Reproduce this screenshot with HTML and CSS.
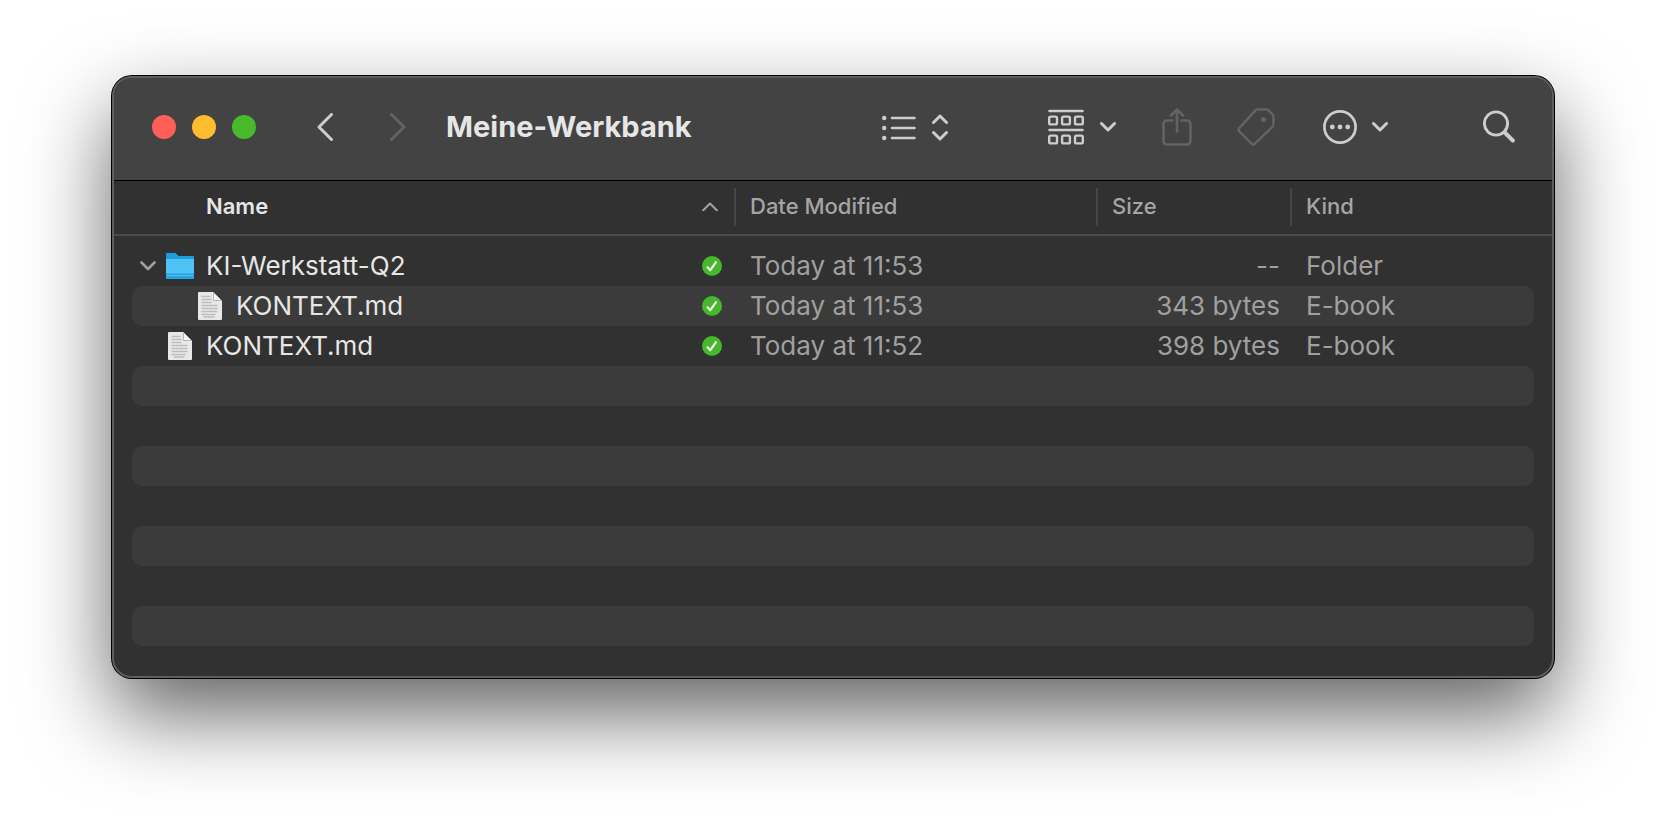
FILE: index.html
```html
<!DOCTYPE html>
<html lang="en">
<head>
    <meta charset="UTF-8">
    <meta name="viewport" content="width=device-width, initial-scale=1.0">
    <title>Meine-Werkbank</title>
    <link rel="stylesheet" href="styles.css">
</head>
<body>
    <!-- shared icons -->
    <svg class="sprite" aria-hidden="true">
        <symbol id="icon-check" viewBox="0 0 20 20">
            <circle cx="10" cy="10" r="10" fill="#45b82c"/>
            <path d="M5.5 11.200 8.300 14.200 14 6.200" fill="none" stroke="#fff" stroke-width="2" stroke-linecap="round" stroke-linejoin="round"/>
        </symbol>
        <symbol id="icon-down" viewBox="0 0 16 10">
            <path d="M1.5 1.5 8 8l6.5-6.5" fill="none" stroke="currentColor" stroke-width="3" stroke-linecap="round" stroke-linejoin="round"/>
        </symbol>
        <symbol id="icon-page" viewBox="0 0 28 28">
            <path d="M3 0h14l9 9v18a1 1 0 0 1-1 1H3a1 1 0 0 1-1-1V1a1 1 0 0 1 1-1z" fill="#e8e8e8"/>
            <path d="M17 0v8a1 1 0 0 0 1 1h8z" fill="#f6f6f6"/>
            <path d="M17.5 1v7.500h8" fill="none" stroke="#b5b5b5" stroke-width="1"/>
            <path d="M6 4.500h8M6 7.500h9M6 10.500h9M6 13.500h16M6 16.500h15M6 19.500h16M6 22.500h13M8 25h10" fill="none" stroke="#bdbdbd" stroke-width="1.300" stroke-dasharray="3 1 2 1 4 1"/>
        </symbol>
        <symbol id="icon-folder" viewBox="0 0 28 26">
            <path d="M0 1a1 1 0 0 1 1-1h8.500l3 3H27a1 1 0 0 1 1 1v8H0z" fill="#1c9fdc"/>
            <path d="M0 6h28v19a1 1 0 0 1-1 1H1a1 1 0 0 1-1-1z" fill="#4fc1f2"/>
            <path d="M0 20.500h28V25a1 1 0 0 1-1 1H1a1 1 0 0 1-1-1z" fill="#23a3df"/>
            <path d="M1 22.500h26" stroke="#4fc1f2" stroke-width="1"/>
        </symbol>
    </svg>

    <main class="window">
        <header class="toolbar">
            <div class="lights">
                <button class="light close" aria-label="Close"></button>
                <button class="light minimize" aria-label="Minimize"></button>
                <button class="light zoom" aria-label="Zoom"></button>
            </div>
            <nav class="history">
                <button aria-label="Back">
                    <svg width="16" height="28" viewBox="0 0 16 28"><path d="M14.500 1.500 2 14l12.500 12.500" stroke-width="3"/></svg>
                </button>
                <button aria-label="Forward" disabled>
                    <svg width="16" height="28" viewBox="0 0 16 28"><path d="M1.500 1.500 14 14 1.500 26.500" stroke-width="3"/></svg>
                </button>
            </nav>
            <h1>Meine-Werkbank</h1>
            <button class="view" aria-label="List view">
                <svg width="34" height="28" viewBox="0 0 34 28">
                    <path d="M10 5h22.500M10 15h22.500M10 25h22.500" stroke-width="2.600"/>
                    <path d="M2.200 5h.01M2.200 15h.01M2.200 25h.01" stroke-width="4.400"/>
                </svg>
                <svg width="16" height="28" viewBox="0 0 16 28"><path d="M1.500 9.500 8 3l6.500 6.500M1.500 19.500 8 26l6.500-6.500" stroke-width="3"/></svg>
            </button>
            <button class="group" aria-label="Group items">
                <svg width="36" height="36" viewBox="0 0 36 36">
                    <path d="M1.500 2h33M1.500 21h33" stroke-width="2.600"/>
                    <g stroke-width="2.400">
                        <rect x="1.200" y="7.600" width="7.800" height="7.800" rx="1.500"/>
                        <rect x="14.100" y="7.600" width="7.800" height="7.800" rx="1.500"/>
                        <rect x="27" y="7.600" width="7.800" height="7.800" rx="1.500"/>
                        <rect x="1.200" y="26.600" width="7.800" height="7.800" rx="1.500"/>
                        <rect x="14.100" y="26.600" width="7.800" height="7.800" rx="1.500"/>
                        <rect x="27" y="26.600" width="7.800" height="7.800" rx="1.500"/>
                    </g>
                </svg>
                <svg width="16" height="10"><use href="#icon-down"/></svg>
            </button>
            <button class="share" aria-label="Share" disabled>
                <svg width="30" height="38" viewBox="0 0 30 38">
                    <path d="M10.500 12.500H5A3.500 3.500 0 0 0 1.500 16v17A3.500 3.500 0 0 0 5 36.500h20a3.500 3.500 0 0 0 3.500-3.500V16a3.500 3.500 0 0 0-3.500-3.500h-5.500M15 23.500V2M9 7.500l6-6 6 6" stroke-width="2.600"/>
                </svg>
            </button>
            <button class="tags" aria-label="Edit tags" disabled>
                <svg width="38" height="38" viewBox="0 0 38 38">
                    <path d="M20.500 1.500h9a3 3 0 0 1 2 .8l4 4a3 3 0 0 1 .9 2.200v8.200a3 3 0 0 1-.9 2.100L17.600 35.900a2 2 0 0 1-2.800 0L2.100 23.200a2 2 0 0 1 0-2.800L18.400 2.400a3 3 0 0 1 2.100-.9z" stroke-width="2.400"/>
                    <circle cx="26.500" cy="11.500" r="2.600" fill="currentColor" stroke="none"/>
                </svg>
            </button>
            <button class="more" aria-label="More actions">
                <svg width="34" height="34" viewBox="0 0 34 34">
                    <circle cx="17" cy="17" r="15.600" stroke-width="2.700"/>
                    <path d="M9.300 17h.01M17 17h.01M24.700 17h.01" stroke-width="4.800"/>
                </svg>
                <svg width="16" height="10"><use href="#icon-down"/></svg>
            </button>
            <button class="search" aria-label="Search">
                <svg width="32" height="34" viewBox="0 0 32 34">
                    <circle cx="13" cy="13.500" r="11.600" stroke-width="2.900"/>
                    <path d="m21.800 22.500 8 8" stroke-width="4"/>
                </svg>
            </button>
        </header>

        <section class="files">
            <table>
                <colgroup>
                    <col>
                    <col class="col-date">
                    <col class="col-size">
                    <col class="col-kind">
                </colgroup>
                <thead>
                    <tr>
                        <th class="sorted" scope="col" aria-sort="ascending">
                            <div class="name-cell">
                                <span class="label">Name</span>
                                <svg width="16" height="10" viewBox="0 0 16 10"><path d="M1 9.500 8 2.500l7 7" stroke-width="2"/></svg>
                            </div>
                        </th>
                        <th scope="col">Date Modified</th>
                        <th scope="col">Size</th>
                        <th scope="col">Kind</th>
                    </tr>
                </thead>
                <tbody>
                    <tr>
                        <td>
                            <div class="name-cell">
                                <button class="disclosure" aria-label="Collapse folder">
                                    <svg width="16" height="10" viewBox="0 0 16 10"><path d="M1.500 1.500 8 8l6.500-6.500" stroke-width="2.600"/></svg>
                                </button>
                                <svg width="28" height="26"><use href="#icon-folder"/></svg>
                                <span class="label">KI-Werkstatt-Q2</span>
                                <svg width="20" height="20"><use href="#icon-check"/></svg>
                            </div>
                        </td>
                        <td>Today at 11:53</td>
                        <td class="size">--</td>
                        <td>Folder</td>
                    </tr>
                    <tr>
                        <td>
                            <div class="name-cell leaf nested">
                                <svg width="28" height="28"><use href="#icon-page"/></svg>
                                <span class="label">KONTEXT.md</span>
                                <svg width="20" height="20"><use href="#icon-check"/></svg>
                            </div>
                        </td>
                        <td>Today at 11:53</td>
                        <td class="size">343 bytes</td>
                        <td>E-book</td>
                    </tr>
                    <tr>
                        <td>
                            <div class="name-cell leaf">
                                <svg width="28" height="28"><use href="#icon-page"/></svg>
                                <span class="label">KONTEXT.md</span>
                                <svg width="20" height="20"><use href="#icon-check"/></svg>
                            </div>
                        </td>
                        <td>Today at 11:52</td>
                        <td class="size">398 bytes</td>
                        <td>E-book</td>
                    </tr>
                    <tr><td></td><td></td><td></td><td></td></tr>
                    <tr><td></td><td></td><td></td><td></td></tr>
                    <tr><td></td><td></td><td></td><td></td></tr>
                    <tr><td></td><td></td><td></td><td></td></tr>
                    <tr><td></td><td></td><td></td><td></td></tr>
                    <tr><td></td><td></td><td></td><td></td></tr>
                    <tr><td></td><td></td><td></td><td></td></tr>
                </tbody>
            </table>
        </section>
    </main>
</body>
</html>
```

FILE: styles.css
```css
* {
    box-sizing: border-box;
}
body {
    min-height: 100vh;
    margin: 0;
    padding: 76px 112px;
    background-color: #fff;
    font-family: Inter, "Liberation Sans", sans-serif;
    color: #e6e6e6;
}
.sprite {
    display: none;
}
svg {
    display: block;
    flex: none;
    fill: none;
    stroke-linecap: round;
    stroke-linejoin: round;
}
button svg,
th svg {
    stroke: currentColor;
}
button {
    display: flex;
    align-items: center;
    padding: 0;
    border: none;
    background: none;
    color: #cdcdcd;
}
button:disabled {
    color: #636363;
}
.window {
    overflow: hidden;
    border: 2px solid #5e5e5e;
    border-radius: 20px;
    background-color: #313131;
    box-shadow: 0 0 0 1px #000, 0 36px 84px rgba(0, 0, 0, 0.62);
}

/* toolbar */
.toolbar {
    display: flex;
    align-items: center;
    height: 103px;
    padding: 0 37px 4px 38px;
    border-bottom: 1px solid #000;
    background-color: #434343;
}
.lights {
    display: flex;
    gap: 16px;
}
.light {
    width: 24px;
    height: 24px;
    border-radius: 50%;
}
.close {
    background-color: #ff5f57;
}
.minimize {
    background-color: #febc2e;
}
.zoom {
    background-color: #48bb2c;
}
.history {
    display: flex;
    gap: 57px;
    margin: 0 40px 0 61px;
}
h1 {
    flex: 1;
    margin: 0;
    font-size: 29px;
    line-height: 40px;
    font-weight: 700;
}
.view {
    gap: 16px;
    margin-right: 100px;
}
.group {
    gap: 16px;
    margin-right: 46px;
}
.share {
    margin-right: 45px;
}
.tags {
    margin-right: 48px;
}
.more {
    gap: 15px;
    margin-right: 95px;
}

/* file list, the gradient is the line under the column headings */
.files {
    padding: 0 18px 30px;
    background: linear-gradient(#4c4c4c, #4c4c4c) 0 53px / 100% 2px no-repeat;
}
table {
    width: 100%;
    table-layout: fixed;
    border-collapse: separate;
    border-spacing: 0;
}
.col-date {
    width: 362px;
}
.col-size {
    width: 194px;
}
.col-kind {
    width: 242px;
}
th {
    position: relative;
    height: 65px;
    padding: 0 14px 16px;
    color: #a5a5a5;
    font-size: 22px;
    line-height: 28px;
    font-weight: 500;
    text-align: left;
}
th:not(:last-child)::after {
    content: "";
    position: absolute;
    top: 7px;
    right: 0;
    width: 2px;
    height: 38px;
    background-color: #454545;
}
th.sorted {
    padding-right: 18px;
}
.sorted .label {
    color: #e6e6e6;
    font-weight: 600;
}
td {
    height: 40px;
    padding: 0 14px;
    color: #a0a0a0;
    font-size: 26px;
    line-height: 32px;
}
th:first-child,
td:first-child {
    padding-left: 8px;
}
tbody tr:nth-child(even) td {
    background-color: #3b3b3b;
}
tbody tr:nth-child(even) td:first-child {
    border-radius: 10px 0 0 10px;
}
tbody tr:nth-child(even) td:last-child {
    border-radius: 0 10px 10px 0;
}
td.size {
    padding-right: 12px;
    text-align: right;
}
.name-cell {
    display: flex;
    align-items: center;
}
.name-cell .label {
    flex: 1;
    margin-left: 12px;
}
td .label {
    color: #e6e6e6;
}
th .label {
    padding-left: 54px;
}
.disclosure {
    margin-right: 10px;
    color: #a0a0a0;
}
.leaf {
    padding-left: 26px;
}
.nested {
    padding-left: 56px;
}
```
